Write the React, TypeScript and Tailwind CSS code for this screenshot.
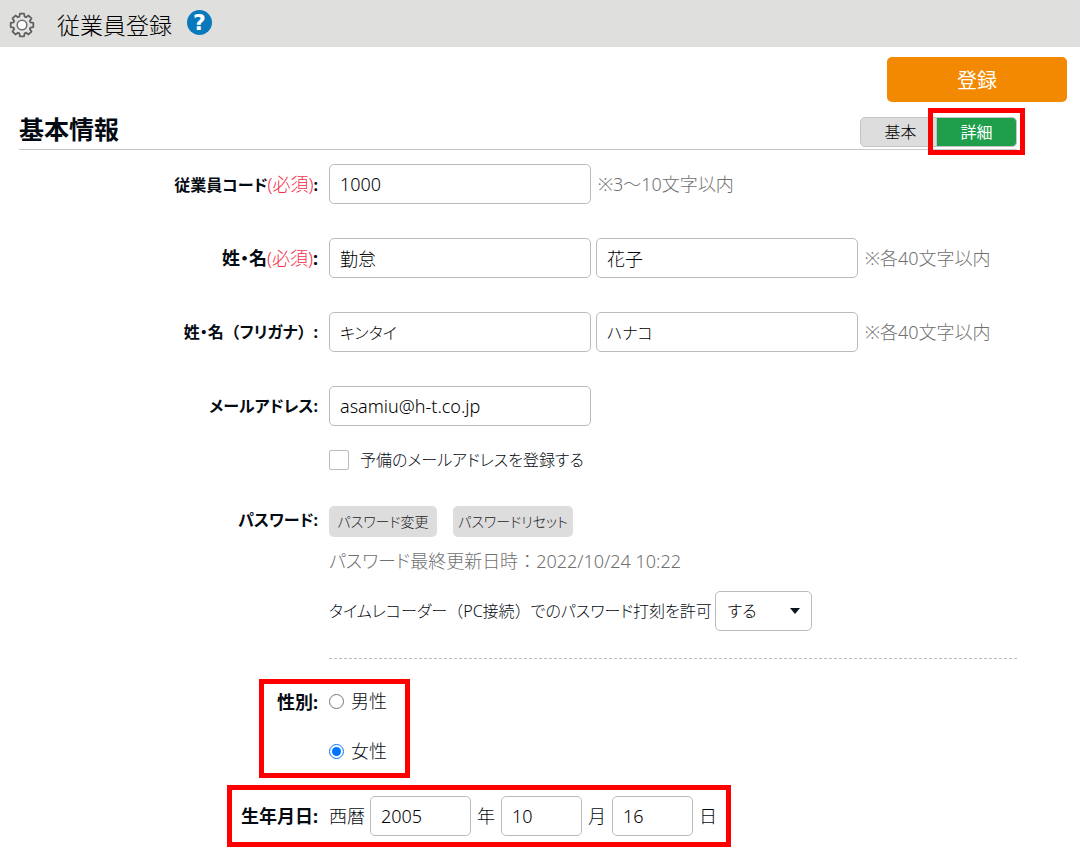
import React from "react";
import clsx from "clsx";

const GEAR_PATH = (() => {
  const center = 13;
  const points: string[] = [];
  for (let i = 0; i < 8; i++) {
    const base = (i * Math.PI) / 4 - Math.PI / 2;
    const corners: [number, number][] = [
      [-0.3, 8.8],
      [-0.18, 11.5],
      [0.18, 11.5],
      [0.3, 8.8],
    ];
    for (const [offset, radius] of corners) {
      const x = center + radius * Math.cos(base + offset);
      const y = center + radius * Math.sin(base + offset);
      points.push(`${x.toFixed(2)} ${y.toFixed(2)}`);
    }
  }
  return `M${points.join("L")}Z`;
})();

function GearIcon() {
  return (
    <svg viewBox="0 0 26 26" className="size-[26px]" aria-hidden="true">
      <path d={GEAR_PATH} fill="#e4e4e2" stroke="#606060" strokeWidth="1.8" strokeLinejoin="round" />
      <circle cx="13" cy="13" r="4.8" fill="#ffffff" stroke="#707070" strokeWidth="1.6" />
    </svg>
  );
}

function Required() {
  return <span className="text-[18px] font-light text-[#f5304d]">(必須)</span>;
}

function FullWidth({ children }: { children: React.ReactNode }) {
  return <span className="[font-feature-settings:normal]">{children}</span>;
}

type RowProps = {
  label: React.ReactNode;
  htmlFor?: string;
  labelId?: string;
  kana?: boolean;
  className?: string;
  children: React.ReactNode;
};

function Row({ label, htmlFor, labelId, kana, className, children }: RowProps) {
  const labelClass = clsx("h-10 pr-px text-right font-bold leading-[40px] whitespace-nowrap", kana && "text-[16px]");
  return (
    <div className={clsx("relative grid grid-cols-[300px_1fr] gap-x-[10px]", className)}>
      {htmlFor ? (
        <label htmlFor={htmlFor} className={labelClass}>{label}:</label>
      ) : (
        <span id={labelId} className={labelClass}>{label}:</span>
      )}
      <div className="min-w-0">{children}</div>
    </div>
  );
}

function TextField({ className, ...props }: React.InputHTMLAttributes<HTMLInputElement>) {
  return (
    <input
      type="text"
      className={clsx("h-10 rounded-[5px] border border-[#bbbbbb] bg-white px-[10px] text-black", className)}
      {...props}
    />
  );
}

function Note({ children }: { children: React.ReactNode }) {
  return <span className="ml-[2px] whitespace-nowrap text-[#707070]">{children}</span>;
}

export default function App() {
  return (
    <div className="min-h-screen bg-white font-['Noto_Sans','Noto_Sans_CJK_JP',sans-serif] text-[18px] leading-6 font-light text-[#050b12] [font-feature-settings:'palt']">
      <header className="flex h-[47px] items-center bg-[#dfdfdd] pt-[2px] pl-[9px]">
        <GearIcon />
        <h1 className="ml-[22px] text-[23px] leading-8 font-light text-black">従業員登録</h1>
        <button
          type="button"
          aria-label="ヘルプ"
          className="mb-1 ml-[15px] flex size-[25px] items-center justify-center rounded-full bg-[#0879bd] font-['DejaVu_Sans',sans-serif] text-[22px] leading-none font-bold text-white"
        >
          ?
        </button>
      </header>

      <form className="pb-4" onSubmit={(e) => e.preventDefault()}>
        <div className="flex justify-end pt-[10px] pr-[13px]">
          <button type="submit" className="h-[45px] w-[180px] rounded-[5px] bg-[#f38900] pt-[2px] text-[20px] font-normal text-white">
            登録
          </button>
        </div>

        <div className="mr-[63px] ml-[19px]">
          <div className="flex h-12 items-center justify-between border-b border-[#c8c8c8]">
            <h2 className="pt-[6px] text-[25px] leading-8 font-bold">基本情報</h2>
            <div className="mt-3 flex h-[30px] text-[16px]">
              <button type="button" className="w-[77px] rounded-l-[5px] border border-[#c4c4c4] bg-[#dddddd] pl-1 text-black">
                基本
              </button>
              <div className="relative">
                <button type="button" className="h-[30px] w-20 rounded-r-[5px] border border-l-0 border-[#c4c4c4] bg-[#1f9f4b] font-normal text-white">
                  詳細
                </button>
                <div className="pointer-events-none absolute -top-[9px] -right-2 -bottom-2 -left-[9px] border-[5px] border-[#ff0000]" />
              </div>
            </div>
          </div>

          <div className="pt-[14px]">
            <div className="flex flex-col gap-[34px]">
              <Row label={<>従業員コード<Required /></>} htmlFor="code" kana>
                <div className="flex items-center gap-[5px]">
                  <TextField id="code" className="w-[262px]" defaultValue="1000" />
                  <Note>※3～10文字以内</Note>
                </div>
              </Row>
              <Row label={<>姓・名<Required /></>} htmlFor="sei">
                <div className="flex items-center gap-[5px]">
                  <TextField id="sei" className="w-[262px]" defaultValue="勤怠" />
                  <TextField aria-label="名" className="w-[262px]" defaultValue="花子" />
                  <Note>※各40文字以内</Note>
                </div>
              </Row>
              <Row label={<>姓・名<FullWidth>（</FullWidth>フリガナ<FullWidth>）</FullWidth></>} htmlFor="sei-kana" kana>
                <div className="flex items-center gap-[5px]">
                  <TextField id="sei-kana" className="w-[262px] text-[16px]" defaultValue="キンタイ" />
                  <TextField aria-label="名（フリガナ）" className="w-[262px] text-[16px]" defaultValue="ハナコ" />
                  <Note>※各40文字以内</Note>
                </div>
              </Row>
              <Row label="メールアドレス" htmlFor="mail" kana>
                <TextField id="mail" className="w-[262px]" defaultValue="asamiu@h-t.co.jp" />
                <div className="mt-[22px] flex items-center gap-[11px]">
                  <input
                    id="spare"
                    type="checkbox"
                    className="size-5 appearance-none rounded-[2px] border border-[#bbbbbb] bg-white checked:bg-[#0075ff]"
                  />
                  <label htmlFor="spare" className="text-[16px]">予備のメールアドレスを登録する</label>
                </div>
              </Row>
            </div>

            <Row label="パスワード" labelId="password-label" className="mt-7" kana>
              <div className="mt-[6px] flex gap-4 text-[14px] text-[#222222]" role="group" aria-labelledby="password-label">
                <button type="button" className="h-[31px] w-[108px] rounded-[5px] bg-[#dddddd] whitespace-nowrap">
                  パスワード変更
                </button>
                <button type="button" className="h-[31px] w-[120px] rounded-[5px] bg-[#dddddd] whitespace-nowrap">
                  パスワードリセット
                </button>
              </div>
              <p className="mt-3 text-[#707070]">
                パスワード最終更新日時<FullWidth>：</FullWidth>2022/10/24 10:22
              </p>
              <div className="mt-[18px] flex items-center gap-[3px]">
                <label htmlFor="permit" className="text-[16px] whitespace-nowrap">
                  タイムレコーダー<FullWidth>（</FullWidth>PC接続<FullWidth>）</FullWidth>でのパスワード打刻を許可
                </label>
                <div className="relative">
                  <select
                    id="permit"
                    defaultValue="する"
                    className="h-10 w-[97px] appearance-none rounded-[5px] border border-[#bbbbbb] bg-white pl-3 text-[16px] text-black"
                  >
                    <option>する</option>
                    <option>しない</option>
                  </select>
                  <svg viewBox="0 0 10 6" className="pointer-events-none absolute top-[17px] right-3 h-[6px] w-[10px]" aria-hidden="true">
                    <path d="M0 0H10L5 6Z" fill="#0a141e" />
                  </svg>
                </div>
              </div>
              <div className="mt-[27px] border-t border-dashed border-[#bbbbbb]" />
            </Row>

            <Row label="性別" labelId="gender-label" className="mt-[23px]">
              <div className="flex flex-col gap-[26px] pt-[7px]" role="radiogroup" aria-labelledby="gender-label">
                <label className="flex items-center gap-[7px]">
                  <input type="radio" name="gender" className="size-[15px] accent-[#0075ff]" />
                  男性
                </label>
                <label className="flex items-center gap-[7px]">
                  <input type="radio" name="gender" defaultChecked className="size-[15px] accent-[#0075ff]" />
                  女性
                </label>
              </div>
              <div className="pointer-events-none absolute -top-[3px] left-[240px] h-[99px] w-[151px] border-[5px] border-[#ff0000]" />
            </Row>

            <Row label="生年月日" htmlFor="year" className="mt-[33px]">
              <div className="flex items-center">
                <span className="w-[41px]">西暦</span>
                <TextField id="year" className="w-[101px]" defaultValue="2005" />
                <span className="w-[30px] text-center">年</span>
                <TextField aria-label="月" className="w-[81px]" defaultValue="10" />
                <span className="w-[30px] text-center">月</span>
                <TextField aria-label="日" className="w-[81px]" defaultValue="16" />
                <span className="w-[30px] text-center">日</span>
              </div>
              <div className="pointer-events-none absolute -top-[11px] left-[208px] h-[62px] w-[504px] border-[5px] border-[#ff0000]" />
            </Row>
          </div>
        </div>
      </form>
    </div>
  );
}
